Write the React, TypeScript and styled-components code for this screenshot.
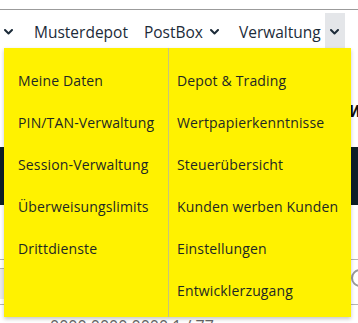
import React from "react";
import styled, { createGlobalStyle } from "styled-components";

const GlobalStyle = createGlobalStyle`
  html, body {
    margin: 0;
    padding: 0;
    background: #fff;
  }
  body {
    font-family: "Open Sans", "Liberation Sans", sans-serif;
    color: #1c2b39;
    overflow: hidden;
  }
`;

const Page = styled.div`
  width: 358px;
  height: 323px;
  overflow: hidden;
  position: relative;
`;

const TopRule = styled.div`
  height: 9px;
  border-bottom: 1px solid #9b9b9b;
`;

const NavBar = styled.nav`
  position: relative;
  height: 38px;
  display: flex;
  align-items: flex-start;
  padding-top: 3px;
  margin-left: -2px;
  box-sizing: border-box;
  z-index: 2;
`;

const NavLink = styled.a<{ $gap?: number }>`
  height: 35px;
  display: flex;
  align-items: center;
  padding-top: 2px;
  box-sizing: border-box;
  margin-left: ${(p) => p.$gap ?? 0}px;
  font-size: 15.5px;
  color: #1c2b39;
  text-decoration: none;
  white-space: nowrap;
`;

const ChevronButton = styled.button<{ $active?: boolean; $gap?: number }>`
  width: 20px;
  height: 35px;
  margin-left: ${(p) => p.$gap ?? 0}px;
  padding: 2px 0 0;
  border: 0;
  background: ${(p) => (p.$active ? "#e4e6e9" : "transparent")};
  display: flex;
  align-items: center;
  justify-content: center;
  color: #1c2b39;
`;

const Dropdown = styled.div`
  position: absolute;
  top: 38px;
  left: 6px;
  width: 347px;
  height: 269px;
  background: #fff200;
  box-shadow: 0 2px 4px rgba(0, 0, 0, 0.22);
  display: grid;
  grid-template-columns: 165px 1fr;
  box-sizing: border-box;
`;

const MenuColumn = styled.ul<{ $inset: number; $divider?: boolean }>`
  list-style: none;
  margin: 0;
  padding: 11px 0 6px ${(p) => p.$inset}px;
  border-right: ${(p) => (p.$divider ? "1px solid #c9c37a" : "0")};
`;

const MenuItem = styled.li`
  height: 42px;
  display: flex;
  align-items: center;
  font-size: 14px;
  letter-spacing: 0.15px;
  color: #1d2824;
  white-space: nowrap;
`;

const Greeting = styled.div`
  margin-top: 52px;
  padding-left: 349px;
  height: 20px;
  font-size: 16px;
  font-weight: 700;
  font-style: italic;
  color: #111;
  white-space: nowrap;
`;

const Band = styled.div`
  margin-top: 27px;
  height: 58px;
  background: #0d1f27;
`;

const Toolbar = styled.div`
  margin-top: 54px;
  height: 44px;
  border-top: 1px solid #b5b5b5;
  border-bottom: 1px solid #b5b5b5;
  display: flex;
  align-items: center;
  justify-content: space-between;
`;

const SearchField = styled.div`
  width: 160px;
  height: 30px;
  margin-top: 8px;
  align-self: flex-start;
  background: #e9e9e9;
  border-top: 1px solid #b5b5b5;
`;

const RoundIcon = styled.span`
  width: 14px;
  height: 14px;
  margin-right: -11px;
  margin-top: -8px;
  border: 2px solid #9a9a9a;
  border-radius: 50%;
`;

const AccountLine = styled.div`
  margin-top: 10px;
  padding-left: 50px;
  font-size: 16px;
  line-height: 22px;
  color: #666;
  white-space: nowrap;
`;

const Chevron = () => (
  <svg width="9" height="6" viewBox="0 0 9 6" fill="none">
    <path d="M1 1l3.5 3.5L8 1" stroke="currentColor" strokeWidth="2" strokeLinecap="round" strokeLinejoin="round" />
  </svg>
);

const left = ["Meine Daten", "PIN/TAN-Verwaltung", "Session-Verwaltung", "Überweisungslimits", "Drittdienste"];
const right = [
  "Depot & Trading",
  "Wertpapierkenntnisse",
  "Steuerübersicht",
  "Kunden werben Kunden",
  "Einstellungen",
  "Entwicklerzugang",
];

export default function App() {
  return (
    <Page>
      <GlobalStyle />
      <TopRule />
      <NavBar>
        <ChevronButton>
          <Chevron />
        </ChevronButton>
        <NavLink $gap={16}>Musterdepot</NavLink>
        <NavLink $gap={16}>PostBox</NavLink>
        <ChevronButton $gap={2}>
          <Chevron />
        </ChevronButton>
        <NavLink $gap={14}>Verwaltung</NavLink>
        <ChevronButton $gap={4} $active>
          <Chevron />
        </ChevronButton>
        <Dropdown>
          <MenuColumn $inset={14} $divider>
            {left.map((item) => (
              <MenuItem key={item}>{item}</MenuItem>
            ))}
          </MenuColumn>
          <MenuColumn $inset={8}>
            {right.map((item) => (
              <MenuItem key={item}>{item}</MenuItem>
            ))}
          </MenuColumn>
        </Dropdown>
      </NavBar>
      <Greeting>Welcome</Greeting>
      <Band />
      <Toolbar>
        <SearchField />
        <RoundIcon />
      </Toolbar>
      <AccountLine>0000 0000 0000 1 / 77</AccountLine>
    </Page>
  );
}
